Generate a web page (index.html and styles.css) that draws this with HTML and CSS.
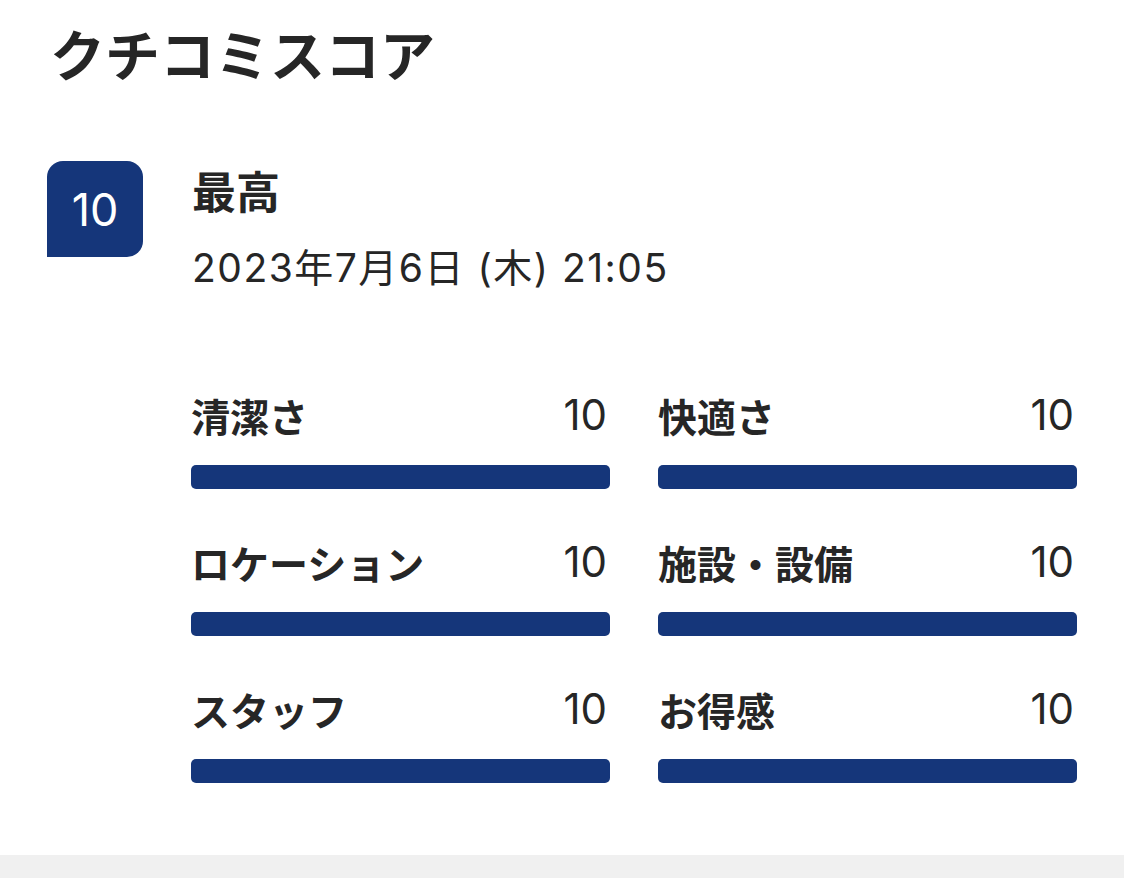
FILE: index.html
```html
<!DOCTYPE html>
<html lang="ja">
<head>
    <meta charset="UTF-8">
    <meta name="viewport" content="width=device-width, initial-scale=1.0">
    <title>クチコミスコア</title>
    <link rel="stylesheet" href="styles.css">
</head>
<body>
    <!-- Überschrift -->
    <h1 class="title">クチコミスコア</h1>

    <!-- Gesamtbewertung -->
    <div class="review">
        <div class="badge">10</div>
        <div class="review-body">
            <div class="rating">最高</div>
            <div class="date">2023年7月6日 (木) 21:05</div>
        </div>
    </div>

    <!-- Einzelwerte -->
    <div class="scores">
        <div class="score">
            <div class="score-head"><span>清潔さ</span><span class="score-num">10</span></div>
            <div class="bar"><div class="bar-fill" style="width: 100%"></div></div>
        </div>
        <div class="score">
            <div class="score-head"><span>快適さ</span><span class="score-num">10</span></div>
            <div class="bar"><div class="bar-fill" style="width: 100%"></div></div>
        </div>
        <div class="score">
            <div class="score-head"><span>ロケーション</span><span class="score-num">10</span></div>
            <div class="bar"><div class="bar-fill" style="width: 100%"></div></div>
        </div>
        <div class="score">
            <div class="score-head"><span>施設・設備</span><span class="score-num">10</span></div>
            <div class="bar"><div class="bar-fill" style="width: 100%"></div></div>
        </div>
        <div class="score">
            <div class="score-head"><span>スタッフ</span><span class="score-num">10</span></div>
            <div class="bar"><div class="bar-fill" style="width: 100%"></div></div>
        </div>
        <div class="score">
            <div class="score-head"><span>お得感</span><span class="score-num">10</span></div>
            <div class="bar"><div class="bar-fill" style="width: 100%"></div></div>
        </div>
    </div>

    <div class="band"></div>
</body>
</html>
```

FILE: styles.css
```css
body {
    font-family: "Noto Sans CJK JP", "Noto Sans", sans-serif;
    margin: 0;
    padding: 0;
    color: #262626;
    background: #fff;
}
.title {
    margin: 0;
    padding: 19px 0 0 50px;
    font-size: 55px;
    line-height: 66px;
    font-weight: 700;
}
.review {
    display: flex;
    gap: 49px;
    margin-top: 76px;
    padding-left: 47px;
}
.badge {
    width: 96px;
    height: 96px;
    background-color: #15367a;
    color: #fff;
    border-radius: 16px 16px 16px 0;
    display: flex;
    align-items: center;
    justify-content: center;
    font-size: 45px;
    font-family: Inter, "Noto Sans", sans-serif;
}
.review-body {
    display: flex;
    flex-direction: column;
    gap: 20px;
    margin-top: -1px;
}
.rating {
    font-size: 44px;
    line-height: 60px;
    font-weight: 700;
}
.date {
    font-family: Inter, "Noto Sans CJK JP", sans-serif;
    font-size: 39px;
    line-height: 56px;
    letter-spacing: 1.5px;
}
.scores {
    display: grid;
    grid-template-columns: 1fr 1fr;
    column-gap: 48px;
    row-gap: 48px;
    padding: 94px 47px 72px 191px;
}
.score-head {
    display: flex;
    justify-content: space-between;
    font-size: 39px;
    line-height: 50px;
    font-weight: 700;
    margin-bottom: 25px;
}
.score-num {
    font-weight: 400;
    font-family: Inter, "Noto Sans", sans-serif;
    font-size: 42px;
    padding-right: 3px;
}
.bar {
    height: 24px;
    border-radius: 5px;
    background-color: #e6e6e6;
    overflow: hidden;
}
.bar-fill {
    height: 100%;
    background-color: #15367a;
}
.band {
    height: 23px;
    background-color: #f0f0f0;
}
```
